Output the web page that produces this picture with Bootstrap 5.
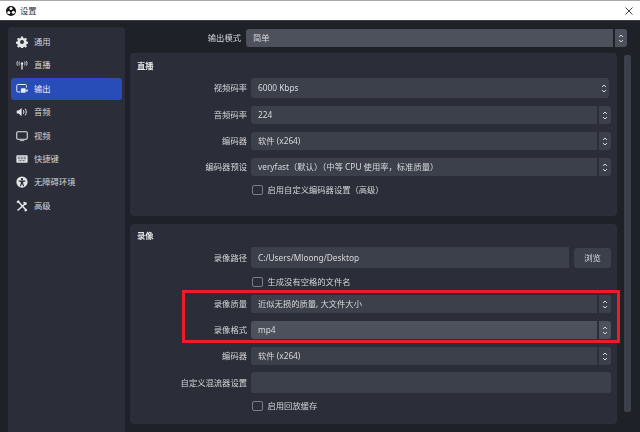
<!DOCTYPE html>
<html lang="zh-CN">
<head>
<meta charset="utf-8">
<title>设置</title>
<link href="https://cdn.jsdelivr.net/npm/bootstrap@5.3.0/dist/css/bootstrap.min.css" rel="stylesheet">
<style>
html,body{width:640px;height:432px;overflow:hidden;margin:0;background:#1f2129}
body{font-family:"Noto Sans","Noto Sans CJK SC",sans-serif;font-size:8.3px;line-height:1.2;color:#d4d5d9}
.win{width:640px;height:432px;position:relative;overflow:hidden;filter:blur(.3px)}
.tbar{height:21px;background:#fff;border-top:1px solid #a9a9a9;border-bottom:1px solid #3b3d44;color:#333;padding:0 5px 0 6px}
.tbar .tt{margin-left:4px}
.bodyw{height:411px}
.side{width:117px;margin:6px 0 0 8px;background:#2b2e38;border-radius:4px 4px 0 0;padding:4px 3px;flex:none}
.sitem{height:22px;margin-bottom:1.4px;padding-left:5px;border-radius:3px;color:#d4d5d9}
.sitem svg{width:12px;height:12px;flex:none;margin-right:6px}
.sitem.on{background:#284cb8;color:#e8ecf8}
.mainc{width:506px;margin-left:5px;position:relative}
.modew{height:18px;margin-top:8px;margin-bottom:6px;padding-right:9px}
.lbl{text-align:right;flex:none}
.mlbl{width:111px;margin-right:5px}
.fld{background:#3c404b;border-radius:3px;color:#d8d9dd;padding-left:7px;flex:1 1 auto;min-width:0}
.fld.hi{background:#4d515c}
.spin{width:12px;flex:none;background:#3c404b;border-radius:0 3px 3px 0;margin-left:2px;display:flex;align-items:center;justify-content:center}
.spin.hi{background:#4d515c}
.rowf{height:18px;margin-bottom:8px}
.rowt{margin-bottom:7px}
.fldw{display:flex;flex:1 1 auto;min-width:0;height:100%}
.fldw .fld{border-radius:3px 0 0 3px}
.fldw svg{width:6px;height:11px}
.grp{width:487px;background:#2b2e38;border-radius:4px;padding:7px 6px 0 7px}
.g1{height:163px;margin-bottom:8px}
.g2{height:200px;padding-top:6px}
.gt{font-weight:700;height:11px;line-height:11px;margin-bottom:7px;color:#e2e3e6}
.g2 .gt{margin-bottom:6px}
.flbl{width:110px;margin-right:4px}
.r20{height:20px}
.r21{height:21px}
.trim{margin-right:2px}
.nospin .fld{border-radius:3px;padding-right:2px}
.ck{height:12px;padding-left:115px}
.boxk{width:10.5px;height:10.5px;border:1px solid #787c86;border-radius:2px;background:#2b2e38;margin-right:5px;flex:none}
.brw{width:37px;height:20px;background:#3c404b;border-radius:3px;margin-left:5px;flex:none;color:#d8d9dd;border:0;padding:0;font-size:8.3px}
.sbar{width:7px;height:357px;background:#3c404b;border-radius:2px;margin:2px 0 0 7px;flex:none}
.redb{position:absolute;left:182px;top:290px;width:438px;height:53px;border:3px solid #ee1c28;pointer-events:none}
.xbtn{width:12px;height:12px}
</style>
</head>
<body>
<div class="win">
  <div class="tbar d-flex align-items-center">
    <svg width="10" height="10" viewBox="0 0 20 20"><circle cx="10" cy="10" r="10" fill="#151515"/><circle cx="10" cy="5.2" r="3.2" fill="#fff"/><circle cx="5.6" cy="13" r="3" fill="#fff"/><circle cx="14.5" cy="12.6" r="3" fill="#fff"/><circle cx="10" cy="10" r="2.6" fill="#151515"/></svg>
    <span class="tt">设置</span>
    <svg class="xbtn ms-auto" viewBox="0 0 12 12"><path d="M2.500 2.500l7 7M9.500 2.500l-7 7" stroke="#444" stroke-width="1" fill="none"/></svg>
  </div>
  <div class="bodyw d-flex">
    <nav class="side">
      <div class="sitem d-flex align-items-center">
        <svg viewBox="0 0 16 16"><path fill="#e4e5e8" fill-rule="evenodd" d="M6.700 1h2.600l.4 2 1.400.6 1.700-1.100 1.800 1.800-1.100 1.700.6 1.400 2 .4v2.600l-2 .4-.6 1.400 1.100 1.700-1.800 1.800-1.700-1.100-1.400.6-.4 2H6.700l-.4-2-1.400-.6-1.700 1.100-1.800-1.800 1.100-1.700-.6-1.400-2-.4V7.800l2-.4.6-1.400-1.100-1.700 1.800-1.800 1.700 1.100 1.400-.6zM8 5.600a2.600 2.600 0 1 0 0 5.200 2.600 2.600 0 0 0 0-5.200z" transform="translate(0 -.2)"/></svg>
        <span>通用</span></div>
      <div class="sitem d-flex align-items-center">
        <svg viewBox="0 0 16 16" fill="none" stroke="#e4e5e8"><circle cx="8" cy="6" r="1.600" fill="#e4e5e8" stroke="none"/><path d="M8 6.500V14" stroke-width="1.800"/><path d="M4.600 3.400C3.800 4.800 3.800 7 4.600 8.400M11.400 3.400c.8 1.400.8 3.600 0 5M2.200 2.800C1 4.600 1 7.200 2.200 9M13.800 2.800C15 4.600 15 7.200 13.800 9" stroke-width="1.200"/></svg>
        <span>直播</span></div>
      <div class="sitem on d-flex align-items-center">
        <svg viewBox="0 0 16 16" fill="none"><path d="M6 12H2.500A1.500 1.500 0 0 1 1 10.500v-7A1.500 1.500 0 0 1 2.500 2h10A1.500 1.500 0 0 1 14 3.500V6" stroke="#e8ecf8" stroke-width="1.300"/><rect x="6.500" y="7" width="6.500" height="6" rx="1" fill="#e8ecf8"/><path d="M13 9.500l2.500-1.500v4L13 10.500z" fill="#e8ecf8"/></svg>
        <span>输出</span></div>
      <div class="sitem d-flex align-items-center">
        <svg viewBox="0 0 16 16" fill="none"><path d="M1 6v4h2.500L7.500 13.500v-11L3.500 6z" fill="#e4e5e8"/><path d="M9.800 5.500c.9 1.500.9 3.500 0 5M12.300 3.500c1.700 2.600 1.700 6.400 0 9" stroke="#e4e5e8" stroke-width="1.300"/></svg>
        <span>音频</span></div>
      <div class="sitem d-flex align-items-center">
        <svg viewBox="0 0 16 16" fill="none"><rect x="1" y="2.200" width="14" height="10" rx="1.500" stroke="#e4e5e8" stroke-width="1.400"/><path d="M5 14.200h6" stroke="#e4e5e8" stroke-width="1.100"/></svg>
        <span>视频</span></div>
      <div class="sitem d-flex align-items-center">
        <svg viewBox="0 0 16 16"><rect x=".5" y="3" width="15" height="10" rx="1" fill="#e4e5e8"/><path d="M2.500 5.500h11M2.500 7.700h11M3.500 10.300h9" stroke="#2b2e38" stroke-width="1.200" stroke-dasharray="1.200 .8" fill="none"/></svg>
        <span>快捷键</span></div>
      <div class="sitem d-flex align-items-center">
        <svg viewBox="0 0 16 16"><circle cx="8" cy="8" r="7.500" fill="#e4e5e8"/><circle cx="8" cy="4.300" r="1.500" fill="#2b2e38"/><path d="M3.500 6h9v1.300L9.600 8v2l1.400 3.500h-1.400L8 10.500 6.400 13.500H5L6.400 10V8L3.500 7.300z" fill="#2b2e38"/></svg>
        <span>无障碍环境</span></div>
      <div class="sitem d-flex align-items-center">
        <svg viewBox="0 0 16 16" fill="none" stroke="#e4e5e8"><path d="M2 14L14 3.500" stroke-width="2"/><path d="M3 2l11 12" stroke-width="2"/><path d="M1.500 3.500L4 1" stroke-width="2.600"/><path d="M11 2.500a2.500 2.500 0 0 0 2.800 3" stroke-width="2.400"/><path d="M12 12.500l2 2" stroke-width="3"/></svg>
        <span>高级</span></div>
    </nav>
    <div class="mainc">
      <div class="modew d-flex align-items-center">
        <div class="lbl mlbl">输出模式</div>
        <div class="fldw">
          <div class="fld hi d-flex align-items-center">简单</div>
          <div class="spin hi"><svg viewBox="0 0 6 11" fill="none" stroke="#d4d5d9"><path d="M1 4l2-2 2 2M1 7l2 2 2-2"/></svg></div>
        </div>
      </div>
      <div class="d-flex">
        <div>
          <section class="grp g1">
            <div class="gt">直播</div>
            <div class="rowf r20 d-flex align-items-center">
              <div class="lbl flbl">视频码率</div>
              <div class="fldw nospin trim">
                <div class="fld d-flex align-items-center justify-content-between">6000 Kbps<svg viewBox="0 0 6 11" fill="none" stroke="#d4d5d9"><path d="M1 4l2-2 2 2M1 7l2 2 2-2"/></svg></div>
              </div>
            </div>
            <div class="rowf d-flex align-items-center">
              <div class="lbl flbl">音频码率</div>
              <div class="fldw"><div class="fld d-flex align-items-center">224</div><div class="spin"><svg viewBox="0 0 6 11" fill="none" stroke="#d4d5d9"><path d="M1 4l2-2 2 2M1 7l2 2 2-2"/></svg></div></div>
            </div>
            <div class="rowf d-flex align-items-center">
              <div class="lbl flbl">编码器</div>
              <div class="fldw"><div class="fld d-flex align-items-center">软件 (x264)</div><div class="spin"><svg viewBox="0 0 6 11" fill="none" stroke="#d4d5d9"><path d="M1 4l2-2 2 2M1 7l2 2 2-2"/></svg></div></div>
            </div>
            <div class="rowf d-flex align-items-center mb-0">
              <div class="lbl flbl">编码器预设</div>
              <div class="fldw"><div class="fld d-flex align-items-center">veryfast（默认）（中等 CPU 使用率，标准质量）</div><div class="spin"><svg viewBox="0 0 6 11" fill="none" stroke="#d4d5d9"><path d="M1 4l2-2 2 2M1 7l2 2 2-2"/></svg></div></div>
            </div>
            <div class="ck d-flex align-items-center mt-2"><span class="boxk"></span>启用自定义编码器设置（高级）</div>
          </section>
          <section class="grp g2">
            <div class="gt">录像</div>
            <div class="rowf r21 d-flex align-items-center">
              <div class="lbl flbl">录像路径</div>
              <div class="fldw"><div class="fld d-flex align-items-center">C:/Users/Mloong/Desktop</div></div>
              <button class="brw" type="button">浏览</button>
            </div>
            <div class="ck d-flex align-items-center rowt">
              <span class="boxk"></span>生成没有空格的文件名</div>
            <div class="rowf d-flex align-items-center">
              <div class="lbl flbl">录像质量</div>
              <div class="fldw"><div class="fld d-flex align-items-center">近似无损的质量, 大文件大小</div><div class="spin"><svg viewBox="0 0 6 11" fill="none" stroke="#d4d5d9"><path d="M1 4l2-2 2 2M1 7l2 2 2-2"/></svg></div></div>
            </div>
            <div class="rowf d-flex align-items-center">
              <div class="lbl flbl">录像格式</div>
              <div class="fldw"><div class="fld hi d-flex align-items-center">mp4</div><div class="spin hi"><svg viewBox="0 0 6 11" fill="none" stroke="#d4d5d9"><path d="M1 4l2-2 2 2M1 7l2 2 2-2"/></svg></div></div>
            </div>
            <div class="rowf rowt d-flex align-items-center">
              <div class="lbl flbl">编码器</div>
              <div class="fldw"><div class="fld d-flex align-items-center">软件 (x264)</div><div class="spin"><svg viewBox="0 0 6 11" fill="none" stroke="#d4d5d9"><path d="M1 4l2-2 2 2M1 7l2 2 2-2"/></svg></div></div>
            </div>
            <div class="rowf r21 rowt d-flex align-items-center">
              <div class="lbl flbl">自定义混流器设置</div>
              <div class="fldw nospin"><div class="fld"></div></div>
            </div>
            <div class="ck d-flex align-items-center"><span class="boxk"></span>启用回放缓存</div>
          </section>
        </div>
        <div class="sbar"></div>
      </div>
    </div>
  </div>
  <div class="redb"></div>
</div>
</body>
</html>
